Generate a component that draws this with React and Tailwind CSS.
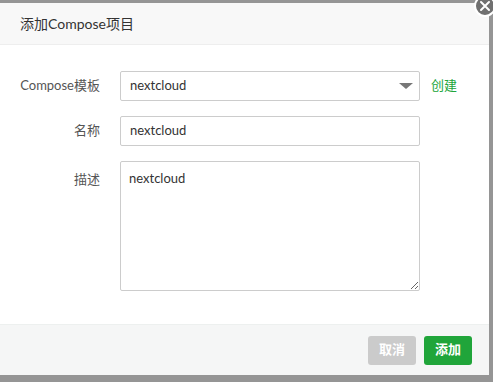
import React from 'react';

const font = { fontFamily: '"Segoe UI", Lato, "Noto Sans CJK SC", sans-serif' };

const FormRow = ({ label, children, top }) => (
  <div className={`flex ${top ? 'items-start' : 'items-center'}`}>
    <label className={`w-[100px] shrink-0 text-right text-[13px] text-[#555] ${top ? 'pt-[9px]' : ''}`}>
      {label}
    </label>
    <div className="ml-[20px] flex items-center">{children}</div>
  </div>
);

const App = () => {
  return (
    <div className="w-[493px] h-[382px] bg-[#959595] pt-[3px] relative overflow-hidden" style={font}>
      <div className="w-[489px] h-[372px] bg-white flex flex-col">
        <div className="h-[42px] shrink-0 bg-[#f8f8f8] border-b border-[#eee] flex items-center pl-[20px] text-[14px] text-[#333]">
          添加Compose项目
        </div>

        <div className="flex-1 pt-[26px] flex flex-col gap-[15px]">
          <FormRow label="Compose模板">
            <div className="w-[300px] h-[30px] border border-[#ccc] rounded-[2px] flex items-center justify-between pl-[9px] pr-[6px] text-[13px] text-[#333]">
              <span>nextcloud</span>
              <span className="w-0 h-0 border-l-[7px] border-r-[7px] border-t-[6px] border-l-transparent border-r-transparent border-t-[#777]" />
            </div>
            <a className="ml-[11px] text-[13px] text-[#20a53a]">创建</a>
          </FormRow>

          <FormRow label="名称">
            <div className="w-[300px] h-[30px] border border-[#ccc] rounded-[2px] flex items-center pl-[9px] text-[13px] text-[#333]">
              nextcloud
            </div>
          </FormRow>

          <FormRow label="描述" top>
            <textarea
              readOnly
              defaultValue="nextcloud"
              className="w-[300px] h-[130px] border border-[#ccc] rounded-[2px] px-[8px] py-[7px] text-[13px] text-[#333] outline-none"
              style={font}
            />
          </FormRow>
        </div>

        <div className="h-[51px] shrink-0 bg-[#f5f6f6] border-t border-[#edf0ef] flex items-center justify-end gap-[8px] pr-[17px]">
          <button className="w-[48px] h-[29px] rounded-[3px] bg-[#cbcbcb] text-white text-[13px] font-bold">取消</button>
          <button className="w-[48px] h-[29px] rounded-[3px] bg-[#20a53a] text-white text-[13px] font-bold">添加</button>
        </div>
      </div>

      <div className="absolute left-[474px] top-[-5px] w-[22px] h-[22px] rounded-full bg-[#707070] border-[2px] border-white flex items-center justify-center">
        <svg width="12" height="12" viewBox="0 0 12 12">
          <path d="M2 2 L10 10 M10 2 L2 10" stroke="white" strokeWidth="2" strokeLinecap="round" />
        </svg>
      </div>
    </div>
  );
};

export default App;
